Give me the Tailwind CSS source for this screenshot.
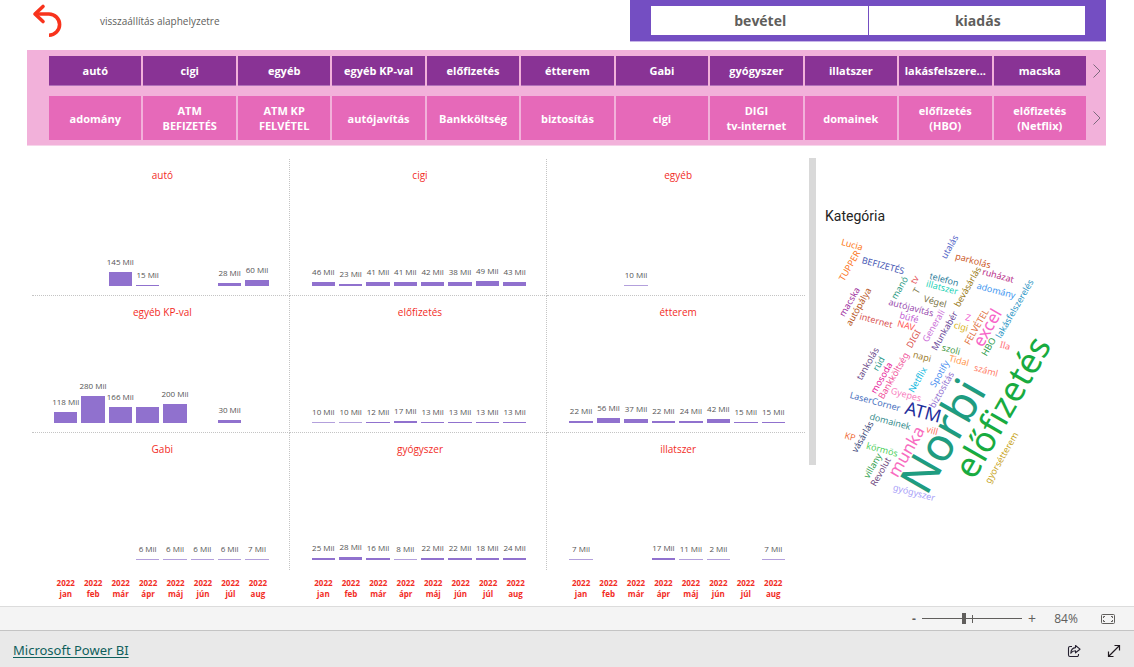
<!DOCTYPE html>
<html lang="hu">
<head>
<meta charset="utf-8">
<meta name="viewport" content="width=device-width, initial-scale=1">
<title>Microsoft Power BI</title>
<script src="https://cdn.jsdelivr.net/npm/@tailwindcss/browser@4"></script>
</head>
<body class="flex min-h-screen flex-col bg-white font-['Open_Sans','Noto_Sans',sans-serif] text-[#605e5c]">

<header class="flex h-[50px] items-start justify-between pr-7 pl-8">
  <div class="flex items-center gap-9">
    <button type="button" aria-label="visszaállítás" class="h-[42px] w-8">
      <svg viewBox="0 0 32 42" class="h-[42px] w-8" fill="none" stroke="#f8331c" stroke-width="3.6" stroke-linecap="round" stroke-linejoin="round"><path d="M11 6.500L3 14l8 7.500"/><path stroke-linecap="butt" d="M3 14h14a10.500 10.500 0 0 1 0 21.200"/></svg>
    </button>
    <span class="text-[10px]">visszaállítás alaphelyzetre</span>
  </div>
  <div class="grid h-[42px] w-[476px] grid-cols-2 gap-px border-b border-[#c8b5e8] bg-[#744ec2] px-[21px] pt-1.5 text-sm font-bold">
    <button type="button" class="h-[29px] bg-white pt-px pl-0.5">bevétel</button>
    <button type="button" class="h-[29px] bg-white pt-px pl-0.5">kiadás</button>
  </div>
</header>

<section class="mr-7 ml-[27px] flex h-24 flex-col gap-2.5 border-b border-[#f7d5ea] bg-[#f2b1da] pt-1.5 pl-[22px] text-[11px] leading-[15px] font-bold text-white">
  <div class="flex">
    <div id="categories" class="grid h-[30px] flex-1 grid-cols-11 gap-0.5"></div>
    <button type="button" aria-label="következő kategóriák" class="flex w-5 items-center justify-center pl-0.5"><svg viewBox="0 0 8 14" class="h-3.5 w-2" fill="none" stroke="#7d6a7d"><path d="M.5.500 7 7 .5 13.500"/></svg></button>
  </div>
  <div class="flex">
    <div id="subcategories" class="grid h-11 flex-1 grid-cols-11 gap-0.5"></div>
    <button type="button" aria-label="következő alkategóriák" class="flex w-5 items-center justify-center pl-0.5"><svg viewBox="0 0 8 14" class="h-3.5 w-2" fill="none" stroke="#7d6a7d"><path d="M.5.500 7 7 .5 13.500"/></svg></button>
  </div>
</section>

<main class="flex flex-1 pt-3 pl-8">
  <section class="flex-1 pt-px">
    <div id="charts" class="grid grid-cols-3"></div>
    <div id="axis" class="grid grid-cols-3"></div>
  </section>
  <div class="ml-1 h-[307px] w-[7px] bg-[#d9d9d9]"></div>
  <section class="w-[318px] pt-12 pl-1">
    <h2 class="pl-[5px] font-[Roboto,sans-serif] text-sm leading-5 text-[#252423]">Kategória</h2>
    <svg id="cloud" viewBox="820 226 300 290" class="h-[290px] w-[300px] font-['Noto_Sans',sans-serif]" text-anchor="middle"></svg>
  </section>
</main>

<div class="flex h-6 items-center justify-end border-t border-[#dcdcdc] bg-[#f4f4f4] pr-[18px] text-xs">
  <button type="button" aria-label="kicsinyítés" class="w-4 text-center leading-4 font-bold">-</button>
  <div class="relative flex h-4 w-[100px] items-center">
    <span class="absolute top-1 left-1/2 h-2 w-px bg-[#605e5c]"></span>
    <input type="range" aria-label="nagyítás" min="0" max="200" value="84" class="relative h-3 w-full appearance-none bg-transparent [&::-webkit-slider-runnable-track]:h-px [&::-webkit-slider-runnable-track]:bg-[#605e5c] [&::-webkit-slider-thumb]:-mt-[5px] [&::-webkit-slider-thumb]:h-[11px] [&::-webkit-slider-thumb]:w-1 [&::-webkit-slider-thumb]:appearance-none [&::-webkit-slider-thumb]:bg-[#605e5c]">
  </div>
  <button type="button" aria-label="nagyítás növelése" class="w-5 text-center text-sm leading-4">+</button>
  <span class="w-12 text-center">84%</span>
  <button type="button" aria-label="oldalhoz igazítás" class="ml-2.5"><svg viewBox="0 0 16 12" class="h-3 w-4" fill="none" stroke="#605e5c"><rect x="1.500" y="1.500" width="13" height="9" rx="1"/><path d="M3.500 5V3.500H5M3.500 7v1.500H5M12.500 5V3.500H11M12.500 7v1.500H11"/></svg></button>
</div>

<footer class="flex h-[37px] items-center border-t border-[#c4c4c4] bg-[#e9e9e9] pt-1 pr-3 pl-[13px]">
  <a href="#" class="mr-auto font-['Noto_Sans',sans-serif] text-[13px] text-[#0f5f5c] underline underline-offset-2">Microsoft Power BI</a>
  <button type="button" aria-label="megosztás" class="mr-6"><svg viewBox="0 0 16 16" class="size-4" fill="none" stroke="#252030" stroke-width="1.100" stroke-linejoin="round"><path d="M6 3.500H4a1.500 1.500 0 0 0-1.500 1.500v7A1.500 1.500 0 0 0 4 13.500h7a1.500 1.500 0 0 0 1.500-1.500v-1"/><path d="M9.500 2.500 14 6.200l-4.500 3.600V7.800C7 7.800 5.700 8.700 4.800 10.200 5 7 6.500 4.900 9.500 4.600z"/></svg></button>
  <button type="button" aria-label="teljes képernyő"><svg viewBox="0 0 16 16" class="size-4" fill="none" stroke="#201a20" stroke-width="1.200"><path d="M2.500 13.500l11-11M8.500 2.500h5v5M2.500 8.500v5h5"/></svg></button>
</footer>

<script>
const byId = id => document.getElementById(id);

byId('categories').innerHTML = ['autó','cigi','egyéb','egyéb KP-val','előfizetés','étterem','Gabi','gyógyszer','illatszer','lakásfelszere...','macska']
  .map(t => `<button type="button" class="overflow-hidden border-b border-[#b070b8] bg-[#893395] whitespace-nowrap">${t}</button>`).join('');
byId('subcategories').innerHTML = ['adomány','ATM<br>BEFIZETÉS','ATM KP<br>FELVÉTEL','autójavítás','Bankköltség','biztosítás','cigi','DIGI<br>tv-internet','domainek','előfizetés<br>(HBO)','előfizetés<br>(Netflix)']
  .map(t => `<button type="button" class="overflow-hidden bg-[#e669b9] whitespace-nowrap">${t}</button>`).join('');

// [title, monthly values in Mil, months drawn without a label]
const charts = [
  ['autó', [0,0,145,15,0,0,28,60]],
  ['cigi', [46,23,41,41,42,38,49,43]],
  ['egyéb', [0,0,10,0,0,0,0,0]],
  ['egyéb KP-val', [118,280,166,160,200,0,30,0], [3]],
  ['előfizetés', [10,10,12,17,13,13,13,13]],
  ['étterem', [22,56,37,22,24,42,15,15]],
  ['Gabi', [0,0,0,6,6,6,6,7]],
  ['gyógyszer', [25,28,16,8,22,22,18,24]],
  ['illatszer', [7,0,0,17,11,2,0,7]]
];
byId('charts').innerHTML = charts.map(([title, values, quiet = []], i) => `
  <figure class="flex h-[137px] flex-col border-dotted border-[#c4c4c4] pt-2 ${i % 3 < 2 ? 'border-r' : ''} ${i < 6 ? 'border-b pb-[9px]' : 'pb-2.5'}">
    <figcaption class="pl-1 text-center text-[10px] leading-4 text-[#f22c1f]">${title}</figcaption>
    <div class="flex flex-1 items-end gap-1 pr-5 pl-[22px] text-[8px] leading-3 text-[#555]">
      ${values.map((v, m) => v ? `<div class="flex flex-1 flex-col items-center gap-1">
        ${quiet.includes(m) ? '' : `<span class="-mx-2 whitespace-nowrap">${v} Mil</span>`}
        <div class="w-full ${v < 12 ? 'bg-[#b3a0dc]' : 'bg-[#9071ce]'}" style="height:${Math.max(1, Math.round(v * 0.097))}px"></div>
      </div>` : '<div class="flex-1"></div>').join('')}
    </div>
  </figure>`).join('');
byId('axis').innerHTML = [0,1,2].map(() => `
  <div class="flex gap-1 pt-[7px] pr-5 pl-[22px] text-center text-[8px] leading-[11px] font-bold text-[#f22c1f]">
    ${['jan','feb','már','ápr','máj','jún','júl','aug'].map(m => `<div class="flex-1">2022<br>${m}</div>`).join('')}
  </div>`).join('');

// [word, centre x, centre y, angle, colour, size]
const words = [
  ['Lucia',852,245,15,'#fd7a20'],['TUPPER',850,266,-60,'#fb7420'],['BEFIZETÉS',883,266,15,'#4a5ab5'],
  ['utalás',950,247,-60,'#5566c8'],['parkolás',973,261,15,'#cc5a2b'],['ruházat',998,276,15,'#b82e8a'],
  ['telefon',944,280,15,'#31809c'],['illatszer',942,288,15,'#1fd3b8'],['bevásárlás',968,287,-60,'#9a7b17'],
  ['adomány',996,291,15,'#3f97f0'],['lakásfelszerelés',1015,309,-60,'#2a95c5'],['manó',900,288,-60,'#2f9c86'],
  ['tv',915,280,-60,'#e5555a'],['T',917,291,-60,'#7b7a4c'],['Végel',935,302,15,'#7a7448'],
  ['macska',850,302,-60,'#a032a0'],['autópálya',859,307,-60,'#b5561c'],['autójavítás',911,308,15,'#9a4fb0'],
  ['internet',876,321,15,'#d95555'],['büfé',909,318,15,'#c565d5'],['NAV',906,326,15,'#ff5555'],
  ['DIGI',914,339,-60,'#d9534f'],['Generali',934,326,-60,'#cc6fd8'],['Munkabér',945,331,-60,'#6b4a9a'],
  ['Z',968,318,15,'#f060d0'],['cigi',961,327,15,'#d8b41a'],['FELVÉTEL',977,327,-60,'#e07040'],
  ['excel',988,328,-60,'#f765c8',17],['HBO',989,347,-60,'#2a9c4a'],['Ila',1005,346,15,'#ff6b75'],
  ['szoli',951,350,15,'#4a9c4a'],['napi',922,357,15,'#a08030'],['Tidal',959,361,15,'#ff9a50'],
  ['száml',986,371,15,'#ff7f6b'],['tankolás',868,364,-60,'#6b4a8a'],['rúd',879,364,-60,'#2f9c8f'],
  ['mosoda',882,378,-60,'#e6209a'],['Bankköltség',894,376,-60,'#f0529a'],['Netflix',918,380,-60,'#10b8e0'],
  ['Spotify',940,374,-60,'#4a8ff0'],['biztosítás',942,390,-60,'#9070d0'],['Gyepes',906,395,15,'#f880c0'],
  ['LaserCorner',875,402,15,'#4a72c0'],['ATM',923,413,15,'#1f2f9c',18],['domainek',890,422,15,'#3a8f8f'],
  ['vill',932,431,15,'#ff7060'],['KP',850,437,15,'#f07040'],['vásárlás',863,437,-60,'#3d4a7a'],
  ['körmös',882,450,15,'#50d060'],['munka',907,452,-60,'#f86cc0',17],['villany',873,466,-60,'#2fa04a'],
  ['Revolut',881,472,-60,'#704a80'],['gyógyszer',914,493,15,'#a8a0f8'],['Norbi',945,437,-60,'#1f9c80',46],
  ['előfizetés',1004,408,-60,'#18ab40',35],['gyorsétterem',1002,458,-60,'#c8a41a']
];
byId('cloud').innerHTML = words.map(([t, x, y, a, c, s = 9]) =>
  `<text transform="translate(${x} ${y}) rotate(${a})" dy="0.3em" font-size="${s}" fill="${c}">${t}</text>`).join('');
</script>
</body>
</html>
